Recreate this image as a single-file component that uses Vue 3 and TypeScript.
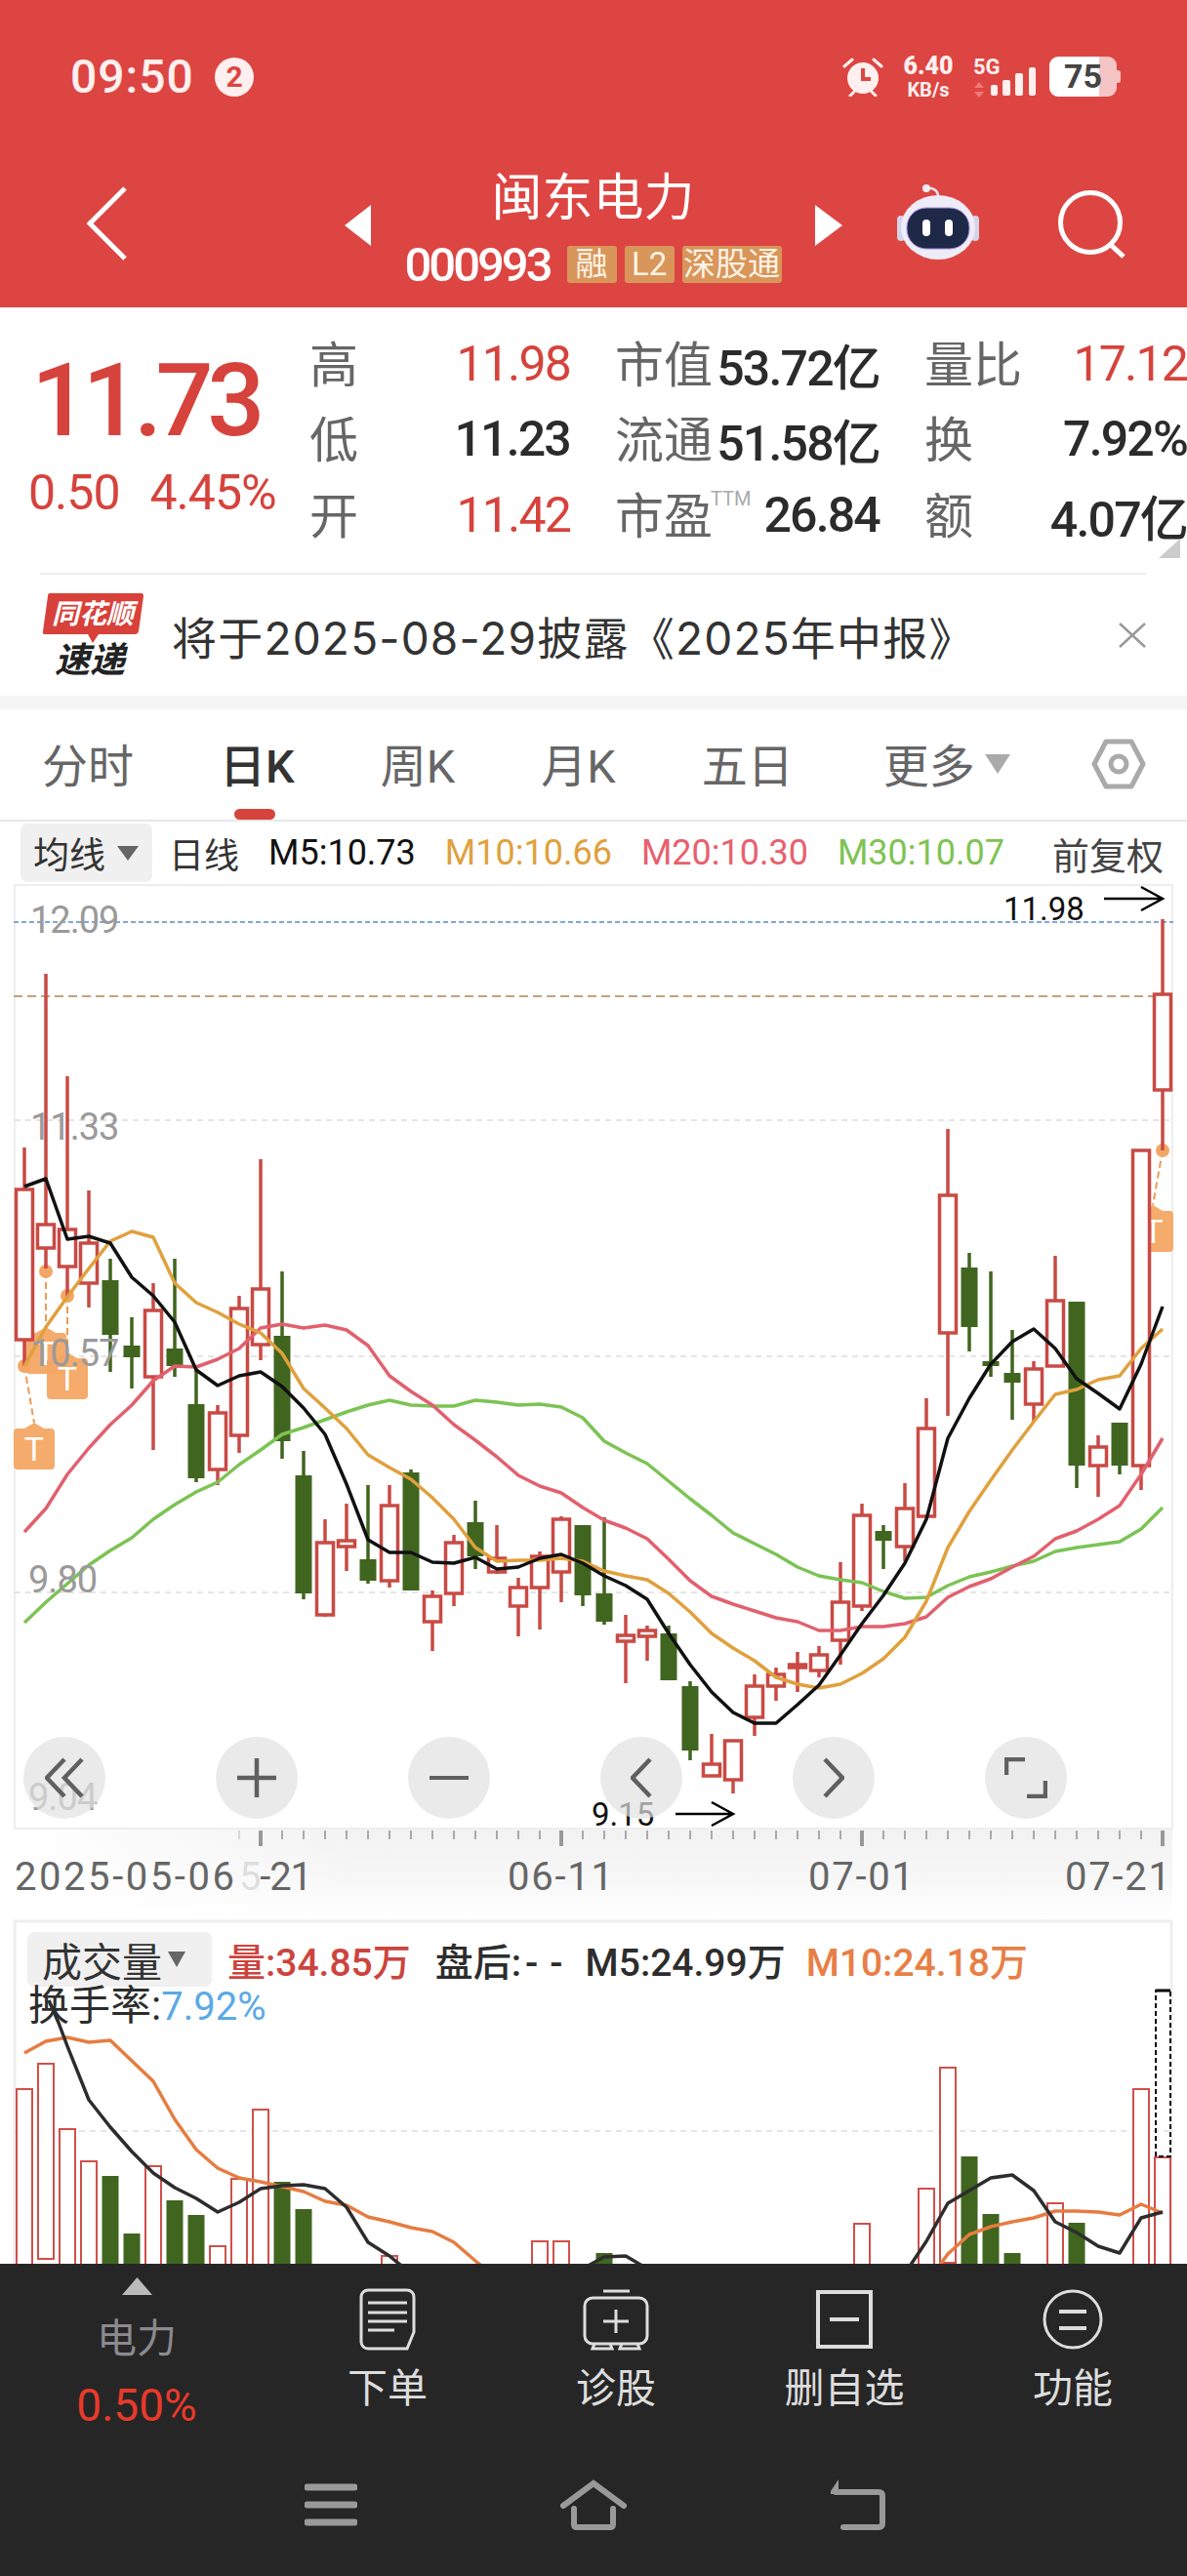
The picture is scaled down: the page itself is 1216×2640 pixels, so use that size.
<script setup lang="ts">
/**
 * App.vue
 * 个股K线详情页（日K + 成交量）
 */
type Candle = [number, number, number, number]

// [wickTop, bodyTop, bodyBottom, wickBottom]，x 由序号推出
const candles: { up: boolean; v: Candle }[] = ([
  [1, 1176, 1219, 1373, 1400], [1, 998, 1255, 1279, 1300], [1, 1103, 1260, 1298, 1329], [1, 1220, 1274, 1315, 1340],
  [0, 1290, 1312, 1368, 1406], [0, 1350, 1379, 1391, 1423], [1, 1315, 1343, 1411, 1486], [0, 1290, 1382, 1400, 1411],
  [0, 1400, 1439, 1515, 1519], [1, 1440, 1448, 1506, 1522], [1, 1328, 1341, 1471, 1489], [1, 1188, 1321, 1378, 1394],
  [0, 1303, 1369, 1477, 1495], [0, 1487, 1512, 1633, 1639], [1, 1557, 1581, 1655, 1657], [1, 1541, 1579, 1585, 1610],
  [0, 1522, 1598, 1620, 1623], [1, 1522, 1543, 1620, 1627], [0, 1506, 1509, 1630, 1630], [1, 1630, 1636, 1662, 1692],
  [1, 1573, 1581, 1633, 1646], [0, 1538, 1560, 1595, 1608], [1, 1563, 1597, 1611, 1613], [1, 1617, 1627, 1646, 1677],
  [1, 1590, 1595, 1627, 1670], [1, 1554, 1557, 1611, 1642], [0, 1563, 1563, 1635, 1646], [0, 1555, 1633, 1662, 1665],
  [1, 1655, 1676, 1682, 1725], [1, 1666, 1671, 1677, 1702], [0, 1666, 1674, 1722, 1722], [0, 1723, 1728, 1794, 1804],
  [1, 1777, 1808, 1820, 1820], [1, 1783, 1784, 1824, 1838], [1, 1716, 1728, 1760, 1779], [1, 1709, 1716, 1728, 1743],
  [1, 1693, 1706, 1709, 1734], [1, 1687, 1696, 1712, 1719], [1, 1601, 1642, 1681, 1706], [1, 1541, 1553, 1646, 1651],
  [0, 1563, 1569, 1579, 1608], [1, 1520, 1546, 1585, 1600], [1, 1433, 1464, 1554, 1554], [1, 1157, 1225, 1366, 1451],
  [0, 1284, 1299, 1360, 1385], [0, 1303, 1395, 1400, 1411], [0, 1363, 1407, 1417, 1455], [1, 1395, 1403, 1439, 1457],
  [1, 1287, 1333, 1400, 1400], [0, 1334, 1334, 1502, 1525], [1, 1471, 1483, 1502, 1534], [0, 1458, 1458, 1502, 1511],
  [1, 1179, 1179, 1502, 1527], [1, 942, 1019, 1117, 1179],
] as number[][]).map((c) => ({ up: c[0] === 1, v: [c[1], c[2], c[3], c[4]] as Candle }))

const xAt = (i: number) => 25 + 22 * i
const line = (ys: number[], from = 0) => ys.map((y, i) => `${xAt(i + from)},${y}`).join(' ')

const ma5 = line([1216, 1208, 1270, 1267, 1274, 1309, 1328, 1355, 1404, 1420, 1410, 1406, 1421, 1443, 1470, 1521, 1578, 1591, 1591, 1601, 1602, 1596, 1608, 1606, 1597, 1593, 1602, 1615, 1625, 1639, 1674, 1706, 1734, 1755, 1766, 1766, 1747, 1727, 1696, 1664, 1635, 1602, 1557, 1474, 1433, 1398, 1375, 1362, 1382, 1413, 1428, 1444, 1398, 1339])
const ma10 = line([1400, 1360, 1329, 1300, 1272, 1262, 1268, 1315, 1335, 1345, 1357, 1366, 1387, 1423, 1443, 1464, 1491, 1504, 1516, 1535, 1557, 1586, 1600, 1599, 1599, 1597, 1600, 1610, 1615, 1619, 1633, 1652, 1674, 1689, 1702, 1719, 1726, 1730, 1726, 1715, 1700, 1678, 1641, 1586, 1549, 1517, 1486, 1457, 1429, 1424, 1414, 1410, 1382, 1362])
const ma20 = line([1570, 1546, 1511, 1484, 1460, 1440, 1415, 1400, 1401, 1393, 1382, 1361, 1357, 1361, 1358, 1363, 1379, 1410, 1426, 1440, 1460, 1476, 1493, 1512, 1523, 1530, 1545, 1558, 1566, 1577, 1598, 1620, 1636, 1644, 1651, 1658, 1662, 1671, 1671, 1667, 1667, 1664, 1657, 1637, 1626, 1618, 1606, 1595, 1577, 1569, 1557, 1543, 1511, 1474])
const ma30 = line([1663, 1642, 1623, 1604, 1589, 1576, 1557, 1542, 1529, 1519, 1501, 1486, 1470, 1463, 1455, 1447, 1440, 1435, 1440, 1441, 1441, 1435, 1437, 1440, 1439, 1442, 1453, 1477, 1489, 1500, 1518, 1536, 1553, 1571, 1582, 1593, 1606, 1615, 1619, 1622, 1631, 1638, 1637, 1625, 1616, 1611, 1605, 1600, 1590, 1586, 1583, 1580, 1567, 1545])

const axisLabels = [
  { text: '12.09', x: 31, y: 956 },
  { text: '11.33', x: 31, y: 1168 },
  { text: '10.57', x: 31, y: 1400 },
  { text: '9.80', x: 29, y: 1632 },
  { text: '9.04', x: 29, y: 1855 },
]

const ticks = Array.from({ length: 44 }, (_, n) => n + 10)
const majorTicks = [11, 25, 39, 53]

const dateLabels = [
  { text: '06-11', x: 520, w: 108 },
  { text: '07-01', x: 828, w: 108 },
  { text: '07-21', x: 1091, w: 108 },
]

// 换手标记：尖角朝上的小标签
const tMarkers = [
  { x: 14, y: 1464, w: 42, dotX: 25, dotY: 1400, tipX: 35 },
  { x: 26, y: 1366, w: 42, dotX: 47, dotY: 1303, tipX: 47 },
  { x: 48, y: 1392, w: 42, dotX: 69, dotY: 1328, tipX: 69 },
  { x: 1161, y: 1241, w: 41, dotX: 1191, dotY: 1179, tipX: 1181 },
]
const markerPath = (m: { x: number; y: number; w: number; tipX: number }) =>
  `M${m.x + 4} ${m.y}H${m.tipX - 10}L${m.tipX} ${m.y - 6}L${m.tipX + 10} ${m.y}H${m.x + m.w - 4}a4 4 0 0 1 4 4V${m.y + 38}a4 4 0 0 1-4 4H${m.x + 4}a4 4 0 0 1-4-4V${m.y + 4}a4 4 0 0 1 4-4z`

const volumes: [number, number, boolean][] = [
  [0, 2141, true], [1, 2115, true], [2, 2182, true], [3, 2215, true], [4, 2230, false], [5, 2289, false],
  [6, 2220, true], [7, 2255, false], [8, 2270, false], [9, 2302, true], [10, 2233, true], [11, 2162, true],
  [12, 2236, false], [13, 2264, false], [17, 2312, true], [24, 2297, true], [25, 2297, true], [27, 2309, false],
  [39, 2279, true], [42, 2243, true], [43, 2119, true], [44, 2210, false], [45, 2269, false], [46, 2309, false],
  [48, 2258, true], [49, 2278, false], [52, 2141, true], [53, 2211, true],
]
const volBlack = '50,2050 60,2073 ' + line([2097, 2152, 2180, 2205, 2227, 2242, 2253, 2267, 2257, 2243, 2240, 2239, 2243, 2262, 2298, 2312, 2330], 2)
const volBlackMid = line([2325, 2313, 2312, 2325], 26)
const volBlackEnd = line([2330, 2297, 2258, 2245, 2232, 2229, 2245, 2277, 2288, 2302, 2309, 2273, 2267], 41)
const volOrange = line([2104, 2092, 2088, 2093, 2091, 2112, 2133, 2172, 2203, 2222, 2232, 2236, 2241, 2246, 2256, 2260, 2272, 2277, 2283, 2287, 2298, 2317, 2335])
const volOrangeEnd = line([2340, 2310, 2290, 2282, 2277, 2273, 2266, 2266, 2267, 2270, 2259, 2268], 42)

const tabs = ['分时', '日K', '周K', '月K', '五日']
const quoteRows = [
  [
    { label: '高', value: '11.98', red: true },
    { label: '市值', value: '53.72亿' },
    { label: '量比', value: '17.12', red: true },
  ],
  [
    { label: '低', value: '11.23' },
    { label: '流通', value: '51.58亿' },
    { label: '换', value: '7.92%' },
  ],
  [
    { label: '开', value: '11.42', red: true },
    { label: '市盈', sup: 'TTM', value: '26.84' },
    { label: '额', value: '4.07亿' },
  ],
]
</script>

<template>
  <div class="page">
    <header class="top">
      <div class="status">
        <span class="time">09:50</span>
        <span class="badge">2</span>
        <svg class="alarm" width="42" height="40" viewBox="0 0 42 40">
          <circle cx="21" cy="21" r="16" fill="#fff0ef" />
          <path d="M21 11v11h8" fill="none" stroke="#dd4542" stroke-width="4" />
          <path d="M2 9l8-7M40 9l-8-7M8 39l4-4M34 39l-4-4" stroke="#fff0ef" stroke-width="3" stroke-linecap="round" />
        </svg>
        <div class="speed"><b>6.40</b><span>KB/s</span></div>
        <div class="net">
          <b>5G</b>
          <svg width="12" height="16" viewBox="0 0 12 16"><path d="M6 0l5 6H1zM6 16l5-6H1z" fill="#ee7a77" /></svg>
        </div>
        <svg class="signal" width="48" height="30" viewBox="0 0 48 30">
          <rect x="1" y="18" width="7" height="11" rx="2" />
          <rect x="13" y="13" width="8" height="16" rx="2" />
          <rect x="26" y="6" width="8" height="23" rx="2" />
          <rect x="40" y="0" width="7" height="29" rx="2" />
        </svg>
        <div class="battery">
          <span>75</span>
        </div>
      </div>
      <div class="nav">
        <svg class="back" width="41" height="76" viewBox="0 0 41 76">
          <path d="M39 2L3 38l36 36" fill="none" stroke="#fff" stroke-width="5" />
        </svg>
        <svg class="tri-left" width="27" height="42" viewBox="0 0 27 42"><path d="M27 0v42L0 21z" fill="#fff" /></svg>
        <div class="title">
          <div class="name">闽东电力</div>
          <div class="code-row">
            <span class="code">000993</span>
            <span class="tag">融</span>
            <span class="tag">L2</span>
            <span class="tag tag-wide">深股通</span>
          </div>
        </div>
        <svg class="tri-right" width="28" height="42" viewBox="0 0 28 42"><path d="M0 0v42l28-21z" fill="#fff" /></svg>
        <svg class="robot" width="84" height="78" viewBox="0 0 84 78">
          <path d="M42 12C42 6 36 3 31 4" fill="none" stroke="#e8e4f4" stroke-width="2.5" />
          <circle cx="30" cy="4" r="4" fill="#efedf6" />
          <rect x="0" y="32" width="8" height="26" rx="4" fill="#d5d3e8" />
          <rect x="76" y="32" width="8" height="26" rx="4" fill="#d5d3e8" />
          <ellipse cx="42" cy="44" rx="38" ry="33" fill="#eeecf6" />
          <rect x="10" y="24" width="64" height="42" rx="20" fill="#1d2947" stroke="#a88fe0" stroke-width="1" />
          <rect x="26" y="36" width="8" height="17" rx="4" fill="#fff" />
          <rect x="49" y="36" width="8" height="17" rx="4" fill="#fff" />
        </svg>
        <svg class="search" width="70" height="72" viewBox="0 0 70 72">
          <circle cx="33" cy="33" r="30.5" fill="none" stroke="#fff" stroke-width="5" />
          <path d="M54 56l13 12" stroke="#fff" stroke-width="5" />
        </svg>
      </div>
    </header>

    <section class="quote">
      <div class="price-col">
        <div class="price">11.73</div>
        <div class="change"><span>0.50</span><span>4.45%</span></div>
      </div>
      <div class="quote-grid">
        <template v-for="(row, r) in quoteRows" :key="r">
          <div v-for="cell in row" :key="cell.label" class="cell">
            <span class="cell-label">{{ cell.label }}<sup v-if="cell.sup">{{ cell.sup }}</sup></span>
            <span class="cell-value" :class="{ red: cell.red }">{{ cell.value }}</span>
          </div>
        </template>
      </div>
      <svg class="corner" width="22" height="20" viewBox="0 0 22 20"><path d="M22 0v20H0z" fill="#ccc" /></svg>
    </section>

    <div class="notice">
      <svg class="logo" width="104" height="95" viewBox="0 0 104 95">
        <path d="M8 0h94q2 0 2 3l-5 36q-1 3-4 3H58l-6 9-5-9H3q-3 0-2-3L6 3q0-3 2-3z" fill="#d8413a" />
        <text x="10" y="31" class="logo-top">同花顺</text>
        <text x="13" y="81" class="logo-bottom">速递</text>
      </svg>
      <span class="notice-text">将于2025-08-29披露《2025年中报》</span>
      <svg class="close" width="28" height="26" viewBox="0 0 28 26"><path d="M1 1l26 24M27 1L1 25" stroke="#999" stroke-width="2.5" /></svg>
    </div>

    <nav class="tabs">
      <span v-for="(tab, i) in tabs" :key="tab" class="tab" :class="{ active: i === 1 }">{{ tab }}</span>
      <span class="tab more">更多<i class="more-arrow" /></span>
      <svg class="hex" width="56" height="52" viewBox="0 0 56 52">
        <path d="M15 3h26l12 23-12 23H15L3 26z" fill="none" stroke="#aaa" stroke-width="5" stroke-linejoin="round" />
        <circle cx="28" cy="26" r="8" fill="none" stroke="#aaa" stroke-width="5" />
      </svg>
    </nav>

    <div class="ma-legend">
      <span class="chip">均线<i class="chip-arrow" /></span>
      <span class="ma-item plain">日线</span>
      <span class="ma-item">M5:10.73</span>
      <span class="ma-item c10">M10:10.66</span>
      <span class="ma-item c20">M20:10.30</span>
      <span class="ma-item c30">M30:10.07</span>
      <span class="ma-item fq">前复权</span>
    </div>

    <div class="kline">
      <svg width="1216" height="1061" viewBox="0 906 1216 1061">
        <defs>
          <linearGradient id="bandV" x1="0" y1="0" x2="0" y2="1">
            <stop offset="0" stop-color="#f2f2f2" />
            <stop offset="0.55" stop-color="#f7f7f7" />
            <stop offset="1" stop-color="#fff" />
          </linearGradient>
          <linearGradient id="bandH" x1="0" y1="0" x2="1" y2="0">
            <stop offset="0" stop-color="#fff" />
            <stop offset="1" stop-color="#fff" stop-opacity="0" />
          </linearGradient>
        </defs>

        <rect x="15" y="907" width="1186" height="967" fill="#fff" stroke="#eee" stroke-width="2" />
        <rect x="15" y="1875" width="1186" height="90" fill="url(#bandV)" />
        <rect x="15" y="1875" width="350" height="90" fill="url(#bandH)" />

        <line x1="15" x2="1201" y1="1148" y2="1148" class="grid" />
        <line x1="15" x2="1201" y1="1390" y2="1390" class="grid" />
        <line x1="15" x2="1201" y1="1632" y2="1632" class="grid" />
        <line x1="14" x2="1202" y1="1021" y2="1021" stroke="#bda57c" stroke-width="2" stroke-dasharray="9 5" />
        <line x1="14" x2="1202" y1="945" y2="945" stroke="#7fa6dc" stroke-width="2" stroke-dasharray="5 3" />

        <g v-for="(m, i) in tMarkers" :key="i">
          <path :d="`M${m.dotX} ${m.dotY}L${m.tipX} ${m.y - 6}`" stroke="#ee9a55" stroke-width="2" stroke-dasharray="7 4" />
          <circle :cx="m.dotX" :cy="m.dotY" r="7" fill="#f3a764" />
          <path :d="markerPath(m)" fill="#f3a764" fill-opacity="0.95" />
          <text :x="m.x + m.w / 2" :y="m.y + 33" class="t-mark">T</text>
        </g>

        <g v-for="(c, i) in candles" :key="i">
          <template v-if="c.up">
            <line :x1="xAt(i)" :x2="xAt(i)" :y1="c.v[0]" :y2="c.v[3]" class="wick-up" />
            <rect :x="xAt(i) - 8.5" :y="c.v[1]" width="17" :height="c.v[2] - c.v[1]" class="body-up" />
          </template>
          <template v-else>
            <line :x1="xAt(i)" :x2="xAt(i)" :y1="c.v[0]" :y2="c.v[3]" class="wick-down" />
            <rect :x="xAt(i) - 8.5" :y="c.v[1]" width="17" :height="c.v[2] - c.v[1]" fill="#40651f" />
          </template>
        </g>

        <polyline :points="ma30" class="ma" stroke="#7cc354" />
        <polyline :points="ma20" class="ma" stroke="#e2606e" />
        <polyline :points="ma10" class="ma" stroke="#e0a03c" />
        <polyline :points="ma5" class="ma" stroke="#111" />

        <text v-for="a in axisLabels" :key="a.text" :x="a.x" :y="a.y" class="axis">{{ a.text }}</text>

        <text x="1028" y="943" class="mark">11.98</text>
        <path d="M1131 921h58m-20-12l22 12-22 12" fill="none" stroke="#000" stroke-width="2.5" />
        <text x="606" y="1871" class="mark">9.15</text>
        <path d="M692 1859h57m-20-12l22 12-22 12" fill="none" stroke="#000" stroke-width="2.5" />

        <line v-for="n in ticks" :key="n" :x1="xAt(n)" :x2="xAt(n)" y1="1876" y2="1885" stroke="#aaa" stroke-width="2" :opacity="n < 11 ? 0.4 : 1" />
        <line v-for="n in majorTicks" :key="'m' + n" :x1="xAt(n)" :x2="xAt(n)" y1="1876" y2="1892" stroke="#999" stroke-width="4" />

        <text x="245" y="1937" class="date" textLength="75"><tspan fill-opacity="0.2">5</tspan>-21</text>
        <text x="15" y="1937" class="date" textLength="225">2025-05-06</text>
        <text v-for="d in dateLabels" :key="d.text" :x="d.x" y="1937" class="date" :textLength="d.w">{{ d.text }}</text>
      </svg>

      <div class="tools">
        <button class="tool"><svg width="40" height="42" viewBox="0 0 40 42"><path d="M20 2L2 21l18 19M38 2L20 21l18 19" /></svg></button>
        <button class="tool"><svg width="40" height="40" viewBox="0 0 40 40"><path d="M0 20h40M20 0v40" /></svg></button>
        <button class="tool"><svg width="40" height="4" viewBox="0 0 40 4"><path d="M0 2h40" /></svg></button>
        <button class="tool"><svg width="22" height="42" viewBox="0 0 22 42"><path d="M20 2L2 21l18 19" /></svg></button>
        <button class="tool"><svg width="22" height="42" viewBox="0 0 22 42"><path d="M2 2l18 19L2 40" /></svg></button>
        <button class="tool"><svg width="44" height="42" viewBox="0 0 44 42"><path d="M21 2H2v16M23 40h19V24" /></svg></button>
      </div>
    </div>

    <div class="volume">
      <svg class="vol-chart" width="1216" height="353" viewBox="0 1967 1216 353">
        <rect x="15" y="1969" width="1185" height="400" fill="#fff" stroke="#eee" stroke-width="3" />
        <line x1="15" x2="1200" y1="2184" y2="2184" class="grid" />
        <template v-for="b in volumes" :key="b[0]">
          <rect v-if="b[2]" :x="xAt(b[0]) - 8" :y="b[1]" width="16" height="200" class="vol-up" />
          <rect v-else :x="xAt(b[0]) - 8.5" :y="b[1]" width="17" height="200" fill="#40651f" />
        </template>
        <rect x="1184" y="2040" width="15" height="170" fill="none" stroke="#000" stroke-width="2" stroke-dasharray="5 3" />
        <line x1="1184" x2="1199" y1="2040" y2="2040" stroke="#000" stroke-width="3" />
        <polyline :points="volOrange" class="ma" stroke="#e67c40" />
        <polyline :points="volOrangeEnd" class="ma" stroke="#e67c40" />
        <polyline :points="volBlack" class="ma" stroke="#2d2d2d" />
        <polyline :points="volBlackMid" class="ma" stroke="#2d2d2d" />
        <polyline :points="volBlackEnd" class="ma" stroke="#2d2d2d" />
      </svg>
      <div class="vol-legend">
        <span class="chip vol-chip">成交量<i class="chip-arrow" /></span>
        <span class="vol-item vol-amount">量:34.85万</span>
        <span class="vol-item vol-after">盘后:<span class="dashes">--</span></span>
        <span class="vol-item vol-m5">M5:24.99万</span>
        <span class="vol-item vol-m10">M10:24.18万</span>
      </div>
      <div class="turnover">换手率:<span>7.92%</span></div>
    </div>

    <footer class="bottom">
      <div class="actions">
        <div class="sector">
          <svg width="31" height="18" viewBox="0 0 31 18"><path d="M15.500 0L31 18H0z" fill="#bbb" /></svg>
          <span class="sector-name">电力</span>
          <span class="sector-rate">0.50%</span>
        </div>
        <div class="action">
          <svg width="58" height="64" viewBox="0 0 58 64">
            <path d="M9 2h40a7 7 0 0 1 7 7v36l-7 17H9a7 7 0 0 1-7-7V9a7 7 0 0 1 7-7z" />
            <path d="M9 15h40M9 25h40M9 34h40M9 43h27" />
          </svg>
          <span>下单</span>
        </div>
        <div class="action">
          <svg width="68" height="62" viewBox="0 0 68 62">
            <path d="M21 2h27" />
            <rect x="2" y="9" width="64" height="47" rx="8" />
            <path d="M34 21v24M21 33h26" />
            <path d="M12 56l-2 5h20l-2-5M40 56l-2 5h20l-2-5" />
          </svg>
          <span>诊股</span>
        </div>
        <div class="action">
          <svg width="58" height="60" viewBox="0 0 58 60">
            <rect x="2" y="2" width="54" height="56" stroke-width="4" />
            <path d="M14 30h30" stroke-width="4" />
          </svg>
          <span>删自选</span>
        </div>
        <div class="action">
          <svg width="62" height="62" viewBox="0 0 62 62">
            <circle cx="31" cy="31" r="29" />
            <path d="M17 23h28M17 40h28" stroke-width="4" />
          </svg>
          <span>功能</span>
        </div>
      </div>
      <div class="sysnav">
        <svg width="54" height="44" viewBox="0 0 54 44">
          <path d="M3 4h48M3 22h48M3 40h48" stroke="#999" stroke-width="7" stroke-linecap="round" />
        </svg>
        <svg width="70" height="52" viewBox="0 0 70 52">
          <path d="M4 27L35 4l31 23" fill="none" stroke="#999" stroke-width="6" stroke-linecap="round" />
          <path d="M15 30v16q0 3 3 3h34q3 0 3-3V30" fill="none" stroke="#999" stroke-width="6" stroke-linecap="round" />
        </svg>
        <svg width="58" height="52" viewBox="0 0 58 52">
          <path d="M9 0L1 12v3h8z" fill="#999" />
          <path d="M6 13h44q4 0 4 4v28q0 4-4 4H14" fill="none" stroke="#999" stroke-width="6" stroke-linecap="round" />
        </svg>
      </div>
    </footer>
  </div>
</template>

<style>
html, body {
  margin: 0;
  background: #fff;
}
</style>

<style scoped>
.page {
  width: 1216px;
  height: 2640px;
  overflow: hidden;
  display: flex;
  flex-direction: column;
  background: #fff;
  font-family: Roboto, "Noto Sans CJK SC", sans-serif;
  color: #333;
}

/* 顶部红色区域 */
.top {
  height: 315px;
  background: #dd4542;
  color: #fff;
  box-sizing: border-box;
  padding-top: 58px;
  flex: none;
}

.status {
  height: 41px;
  display: flex;
  align-items: center;
  padding-left: 72px;
  color: #fff0ef;
}

.time {
  width: 126px;
  font-size: 48px;
  font-weight: 500;
  letter-spacing: 1px;
  white-space: nowrap;
}

.badge {
  width: 40px;
  height: 40px;
  border-radius: 50%;
  background: #fff0ef;
  color: #dd4542;
  font-size: 30px;
  font-weight: 700;
  line-height: 40px;
  text-align: center;
  margin-left: 22px;
}

.alarm {
  margin-left: 603px;
}

.speed {
  margin-left: 19px;
  width: 54px;
  display: flex;
  flex-direction: column;
  align-items: center;
  line-height: 1;
  font-size: 20px;
  font-weight: 700;
}

.speed b {
  font-size: 25px;
  margin-bottom: 2px;
}

.net {
  margin-left: 19px;
  width: 28px;
  display: flex;
  flex-direction: column;
  line-height: 1;
  gap: 4px;
}

.net b {
  font-size: 22px;
}

.signal {
  fill: #fff0ef;
  margin: 10px 0 0 -11px;
}

.battery {
  margin-left: 13px;
  width: 69px;
  height: 41px;
  box-sizing: border-box;
  border-radius: 9px;
  background: linear-gradient(90deg, #fff 74%, #f5c4c4 74%);
  position: relative;
  color: #444;
  font-size: 34px;
  font-weight: 700;
  line-height: 41px;
  padding-left: 15px;
}

.battery::after {
  content: "";
  position: absolute;
  right: -4px;
  top: 14px;
  width: 4px;
  height: 13px;
  border-radius: 0 3px 3px 0;
  background: #f5c4c4;
}

.nav {
  display: flex;
  align-items: flex-start;
  margin-top: 76px;
  padding-left: 89px;
}

.back {
  margin: 16px 223px 0 0;
}

.tri-left,
.tri-right {
  margin-top: 35px;
}

.title {
  width: 455px;
  margin-top: -7px;
  text-align: center;
}

.name {
  font-size: 52px;
  line-height: 72px;
}

.code-row {
  display: flex;
  justify-content: center;
  align-items: center;
  gap: 8px;
  margin-top: 11px;
  height: 40px;
}

.code {
  font-size: 49px;
  font-weight: 500;
  letter-spacing: -3px;
  margin-right: 9px;
}

.tag {
  width: 51px;
  height: 38px;
  border-radius: 3px;
  background: #d8965a;
  color: #fdf3e6;
  font-size: 33px;
  line-height: 38px;
  overflow: hidden;
  white-space: nowrap;
}

.tag-wide {
  width: 102px;
}

.robot {
  margin: 14px 0 0 56px;
}

.search {
  margin: 20px 0 0 81px;
}

/* 行情概览 */
.quote {
  position: relative;
  display: flex;
  height: 272px;
  flex: none;
}

.price-col {
  width: 318px;
  flex: none;
}

.price {
  font-size: 104px;
  font-weight: 500;
  letter-spacing: -6.500px;
  line-height: 100px;
  color: #d6433c;
  margin: 46px 0 0 32px;
}

.change {
  display: flex;
  gap: 31px;
  margin: 16px 0 0 29px;
  font-size: 50px;
  letter-spacing: -1px;
  line-height: 56px;
  color: #d6433c;
}

.quote-grid {
  display: grid;
  grid-template-columns: 266px 270px 268px;
  column-gap: 47px;
  grid-auto-rows: 77.500px;
  padding-top: 19px;
}

.cell {
  display: flex;
  justify-content: space-between;
  align-items: center;
}

.cell-label {
  font-size: 50px;
  color: #666;
  position: relative;
  top: -3px;
  left: -1px;
}

.cell-label sup {
  position: absolute;
  left: 98px;
  top: 12px;
  font-size: 20px;
  line-height: 20px;
  color: #aaa;
}

.cell-value {
  font-size: 50px;
  letter-spacing: -1.800px;
  font-weight: 500;
  color: #2b2b2b;
  white-space: nowrap;
}

.cell-value.red {
  font-weight: 400;
  color: #d6433c;
}

.corner {
  position: absolute;
  right: 7px;
  top: 237px;
}

.notice {
  margin: 0 42px 0 41px;
  height: 126px;
  border-top: 2px solid #eee;
  box-sizing: border-box;
  display: flex;
  align-items: center;
  position: relative;
  flex: none;
}

.logo {
  flex: none;
  margin: 8px 0 0 2px;
}

.logo-top {
  font-size: 28px;
  font-weight: 700;
  font-style: italic;
  fill: #fff;
}

.logo-bottom {
  font-size: 36px;
  font-weight: 700;
  font-style: italic;
  fill: #222;
}

.notice-text {
  font-family: Inter, "Noto Sans CJK SC", sans-serif;
  font-size: 46px;
  letter-spacing: 1.200px;
  color: #333;
  margin-left: 29px;
  white-space: nowrap;
}

.close {
  margin-left: auto;
}

/* 周期切换 */
.tabs {
  border-top: 14px solid #f5f5f5;
  border-bottom: 2px solid #e8e8e8;
  height: 129px;
  box-sizing: border-box;
  display: flex;
  align-items: center;
  gap: 88px;
  padding: 4px 0 0 43px;
  position: relative;
  flex: none;
}

.tab {
  font-size: 47px;
  color: #666;
  white-space: nowrap;
  position: relative;
  line-height: 60px;
}

.tab.active {
  color: #333;
  font-weight: 500;
}

.tab.active::after {
  content: "";
  position: absolute;
  left: 15px;
  bottom: -24px;
  width: 42px;
  height: 11px;
  border-radius: 6px;
  background: #d6433c;
}

.more {
  margin-left: 4px;
}

.more-arrow {
  position: absolute;
  left: 104px;
  top: 17px;
  width: 0;
  height: 0;
  border-left: 13px solid transparent;
  border-right: 13px solid transparent;
  border-top: 20px solid #aaa;
}

.hex {
  position: absolute;
  left: 1118px;
  top: 30px;
}

/* 均线图例 */
.ma-legend {
  height: 64px;
  display: flex;
  align-items: center;
  gap: 30px;
  padding: 0 24px 0 21px;
  font-size: 36px;
  white-space: nowrap;
  flex: none;
}

.chip {
  flex: none;
  width: 135px;
  height: 60px;
  border-radius: 7px;
  background: #f0f0f0;
  box-sizing: border-box;
  padding-left: 13px;
  display: flex;
  align-items: center;
  gap: 12px;
  color: #333;
  margin-right: -13px;
  font-size: 37px;
}

.chip-arrow {
  width: 0;
  height: 0;
  border-left: 11px solid transparent;
  border-right: 11px solid transparent;
  border-top: 15px solid #666;
}

.ma-item {
  color: #111;
}

.ma-item.plain {
  color: #333;
}

.ma-item.c10 {
  color: #e0a03c;
}

.ma-item.c20 {
  color: #e8606e;
}

.ma-item.c30 {
  color: #7ec353;
}

.ma-item.fq {
  margin-left: auto;
  font-size: 38px;
  color: #444;
}

/* K线图 */
.kline {
  position: relative;
  height: 1061px;
  flex: none;
}

.kline svg {
  display: block;
}

.grid {
  stroke: #ddd;
  stroke-width: 1.500;
  stroke-dasharray: 6 5;
}

.wick-up,
.wick-down {
  stroke-width: 3.500;
}

.wick-up {
  stroke: #c94a44;
}

.wick-down {
  stroke: #40651f;
}

.body-up {
  fill: #fff;
  stroke: #c94a44;
  stroke-width: 3.500;
}

.ma {
  fill: none;
  stroke-width: 3.500;
  stroke-linejoin: round;
}

.axis {
  font-size: 38px;
  letter-spacing: -1px;
  fill: #9a9a9a;
}

.mark {
  font-size: 33px;
  fill: #111;
}

.t-mark {
  font-size: 34px;
  fill: #fff;
  text-anchor: middle;
}

.date {
  font-size: 40px;
  fill: #666;
}

.tools {
  position: absolute;
  left: 24px;
  top: 874px;
  display: flex;
  gap: 113px;
}

.tool {
  width: 84px;
  height: 84px;
  padding: 0;
  border: 0;
  border-radius: 50%;
  background: rgba(225, 225, 225, 0.7);
  display: flex;
  align-items: center;
  justify-content: center;
}

.tool path {
  fill: none;
  stroke: #606060;
  stroke-width: 4.500;
}

/* 成交量 */
.volume {
  position: relative;
  height: 353px;
  flex: none;
  overflow: hidden;
}

.vol-chart {
  position: absolute;
  left: 0;
  top: 0;
}

.vol-up {
  fill: #fff;
  stroke: #d0504a;
  stroke-width: 2;
}

.vol-legend {
  position: relative;
  display: flex;
  align-items: center;
  padding: 13px 0 0 28px;
  font-size: 39px;
  font-weight: 500;
  white-space: nowrap;
  color: #2d2d2d;
}

.vol-chip {
  width: 189px;
  height: 56px;
  font-size: 41px;
  font-weight: 400;
  gap: 6px;
  padding-left: 15px;
  margin-right: 0;
}

.vol-chip .chip-arrow {
  border-left-width: 9px;
  border-right-width: 9px;
  border-top-width: 16px;
}

.vol-amount {
  color: #cc443e;
  margin-left: 16px;
}

.vol-after {
  margin-left: 25px;
}

.dashes {
  letter-spacing: 12px;
  margin-left: 4px;
}

.vol-m5 {
  margin-left: 11px;
}

.vol-m10 {
  color: #e87f46;
  margin-left: 21px;
}

.turnover {
  position: relative;
  margin: 0 0 0 29px;
  font-size: 42px;
  line-height: 40px;
  color: #2d2d2d;
}

.turnover span {
  font-size: 40px;
  color: #5aa9e6;
}

/* 底部操作栏 */
.bottom {
  flex: 1;
  background: #262626;
  display: flex;
  flex-direction: column;
}

.actions {
  display: grid;
  grid-template-columns: 280px repeat(4, 234px);
  height: 200px;
}

.sector {
  display: flex;
  flex-direction: column;
  align-items: center;
  padding-top: 14px;
}

.sector-name {
  font-size: 41px;
  line-height: 50px;
  color: #8a8a8f;
  margin-top: 20px;
}

.sector-rate {
  font-size: 46px;
  line-height: 54px;
  color: #e83a2a;
  margin-top: 16px;
}

.action {
  display: flex;
  flex-direction: column;
  align-items: center;
  padding-top: 25px;
  color: #ddd;
  font-size: 41px;
  line-height: 56px;
}

.action svg {
  height: 64px;
  margin-bottom: 11px;
  fill: none;
  stroke: #ddd;
  stroke-width: 3;
}

.sysnav {
  position: relative;
  display: flex;
  align-items: center;
  padding: 21px 0 0 312px;
  gap: 207px;
}
</style>
